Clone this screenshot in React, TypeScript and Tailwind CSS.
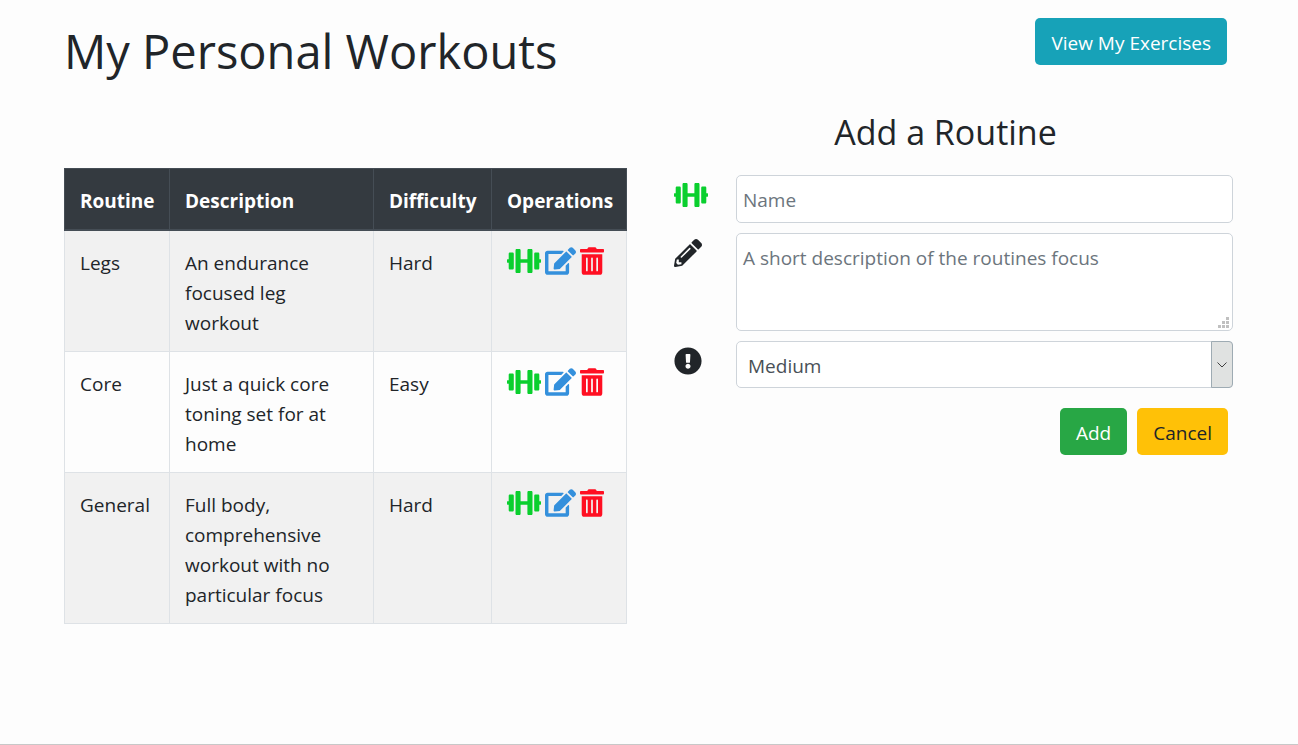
import { FaDumbbell, FaEdit, FaTrashAlt, FaPencilAlt, FaExclamationCircle } from "react-icons/fa";

const routines = [
  { name: "Legs", description: "An endurance focused leg workout", difficulty: "Hard" },
  { name: "Core", description: "Just a quick core toning set for at home", difficulty: "Easy" },
  { name: "General", description: "Full body, comprehensive workout with no particular focus", difficulty: "Hard" },
];

const headings = ["Routine", "Description", "Difficulty", "Operations"];

function RoutineTable() {
  return (
    <table className="w-full table-fixed border-collapse border border-[#dee2e6] text-left">
      <colgroup>
        <col className="w-[105px]" />
        <col />
        <col className="w-[118px]" />
        <col className="w-[135px]" />
      </colgroup>
      <thead>
        <tr className="bg-[#343a40] text-white">
          {headings.map((heading) => (
            <th key={heading} className="border border-b-2 border-[#454d55] px-[15px] pt-[17px] pb-[13px] font-bold">
              {heading}
            </th>
          ))}
        </tr>
      </thead>
      <tbody>
        {routines.map((routine) => (
          <tr key={routine.name} className="align-top odd:bg-[#f1f1f1]">
            <td className="border border-[#dee2e6] px-[15px] pt-[17px] pb-[13px]">{routine.name}</td>
            <td className="border border-[#dee2e6] px-[15px] pt-[17px] pb-[13px]">
              <div className="max-w-[160px]">{routine.description}</div>
            </td>
            <td className="border border-[#dee2e6] px-[15px] pt-[17px] pb-[13px]">{routine.difficulty}</td>
            <td className="border border-[#dee2e6] px-[15px] py-4">
              <div className="flex items-center gap-1">
                <button type="button" aria-label={`Start ${routine.name}`} className="text-[#0acf2e]">
                  <FaDumbbell className="h-7 w-[34px]" />
                </button>
                <button type="button" aria-label={`Edit ${routine.name}`} className="text-[#3490dc]">
                  <FaEdit className="h-7 w-[31px]" />
                </button>
                <button type="button" aria-label={`Delete ${routine.name}`} className="text-[#ff0f22]">
                  <FaTrashAlt className="h-7 w-6" />
                </button>
              </div>
            </td>
          </tr>
        ))}
      </tbody>
    </table>
  );
}

function RoutineForm() {
  return (
    <form className="flex flex-col gap-[10px]" onSubmit={(event) => event.preventDefault()}>
      <div className="flex">
        <label htmlFor="name" aria-label="Name" className="w-[62px] shrink-0 pt-[6px] text-[#0acf2e]">
          <FaDumbbell className="h-7 w-[34px]" />
        </label>
        <input
          id="name"
          type="text"
          placeholder="Name"
          className="h-12 min-w-0 flex-1 rounded-[5px] border border-[#ced4da] bg-white px-[6px] pt-[2px] placeholder:text-[#6c757d]"
        />
      </div>
      <div className="flex">
        <label htmlFor="description" aria-label="Description" className="w-[62px] shrink-0 pt-[6px]">
          <FaPencilAlt className="size-7" />
        </label>
        <div className="relative flex min-w-0 flex-1">
          <textarea
            id="description"
            placeholder="A short description of the routines focus"
            className="h-[98px] w-full resize-none rounded-[5px] border border-[#ced4da] bg-white px-[6px] py-[9px] placeholder:text-[#6c757d]"
          />
          <svg className="pointer-events-none absolute right-1 bottom-[3px] h-[11px] w-[11px] fill-[#c0c0c0]" viewBox="0 0 11 11" aria-hidden="true">
            <path d="M8 0h3v3H8zM4 4h3v3H4zM8 4h3v3H8zM0 8h3v3H0zM4 8h3v3H4zM8 8h3v3H8z" />
          </svg>
        </div>
      </div>
      <div className="flex">
        <label htmlFor="difficulty" aria-label="Difficulty" className="w-[62px] shrink-0 pt-[6px]">
          <FaExclamationCircle className="size-7" />
        </label>
        <div className="relative flex min-w-0 flex-1">
          <select
            id="difficulty"
            defaultValue="Medium"
            className="h-[47px] w-full appearance-none rounded-[5px] border border-[#ced4da] bg-white px-[11px] pt-[2px] text-[#495057]"
          >
            <option>Easy</option>
            <option>Medium</option>
            <option>Hard</option>
          </select>
          <span className="pointer-events-none absolute inset-y-0 right-0 flex w-[22px] items-center justify-center rounded-r-[4px] border border-[#9eabb3] bg-[#e0e2e1]">
            <svg className="h-[6px] w-[10px]" viewBox="0 0 10 6" fill="none" stroke="#404040" aria-hidden="true">
              <path d="M.5.5 5 5 9.5.5" />
            </svg>
          </span>
        </div>
      </div>
      <div className="flex justify-end gap-[10px] pt-[10px] pr-[5px]">
        <button type="submit" className="h-[47px] rounded-[5px] bg-[#28a745] px-4 pt-[2px] text-white">
          Add
        </button>
        <button type="reset" className="h-[47px] rounded-[5px] bg-[#ffc107] px-4 pt-[2px]">
          Cancel
        </button>
      </div>
    </form>
  );
}

export default function App() {
  return (
    <div className="flex min-h-screen flex-col border-b border-[#c8c8c8] bg-[#fdfdfd] pr-[65px] pl-16 font-['Open_Sans','Noto_Sans',sans-serif] text-[19px] leading-[30px] text-[#212529]">
      <header className="flex items-start justify-between pt-[18px] pr-[6px]">
        <h1 className="pt-[2px] text-[47px] leading-[62px]">My Personal Workouts</h1>
        <a href="#exercises" className="rounded-[5px] bg-[#17a2b8] px-4 pt-[10px] pb-[7px] text-white">
          View My Exercises
        </a>
      </header>
      <main className="grid grid-cols-[563fr_559fr] gap-x-[47px] pt-[26px]">
        <section className="pt-[60px]">
          <RoutineTable />
        </section>
        <section>
          <h2 className="pr-4 pb-[19px] text-center text-[34px] leading-[48px]">Add a Routine</h2>
          <RoutineForm />
        </section>
      </main>
    </div>
  );
}
